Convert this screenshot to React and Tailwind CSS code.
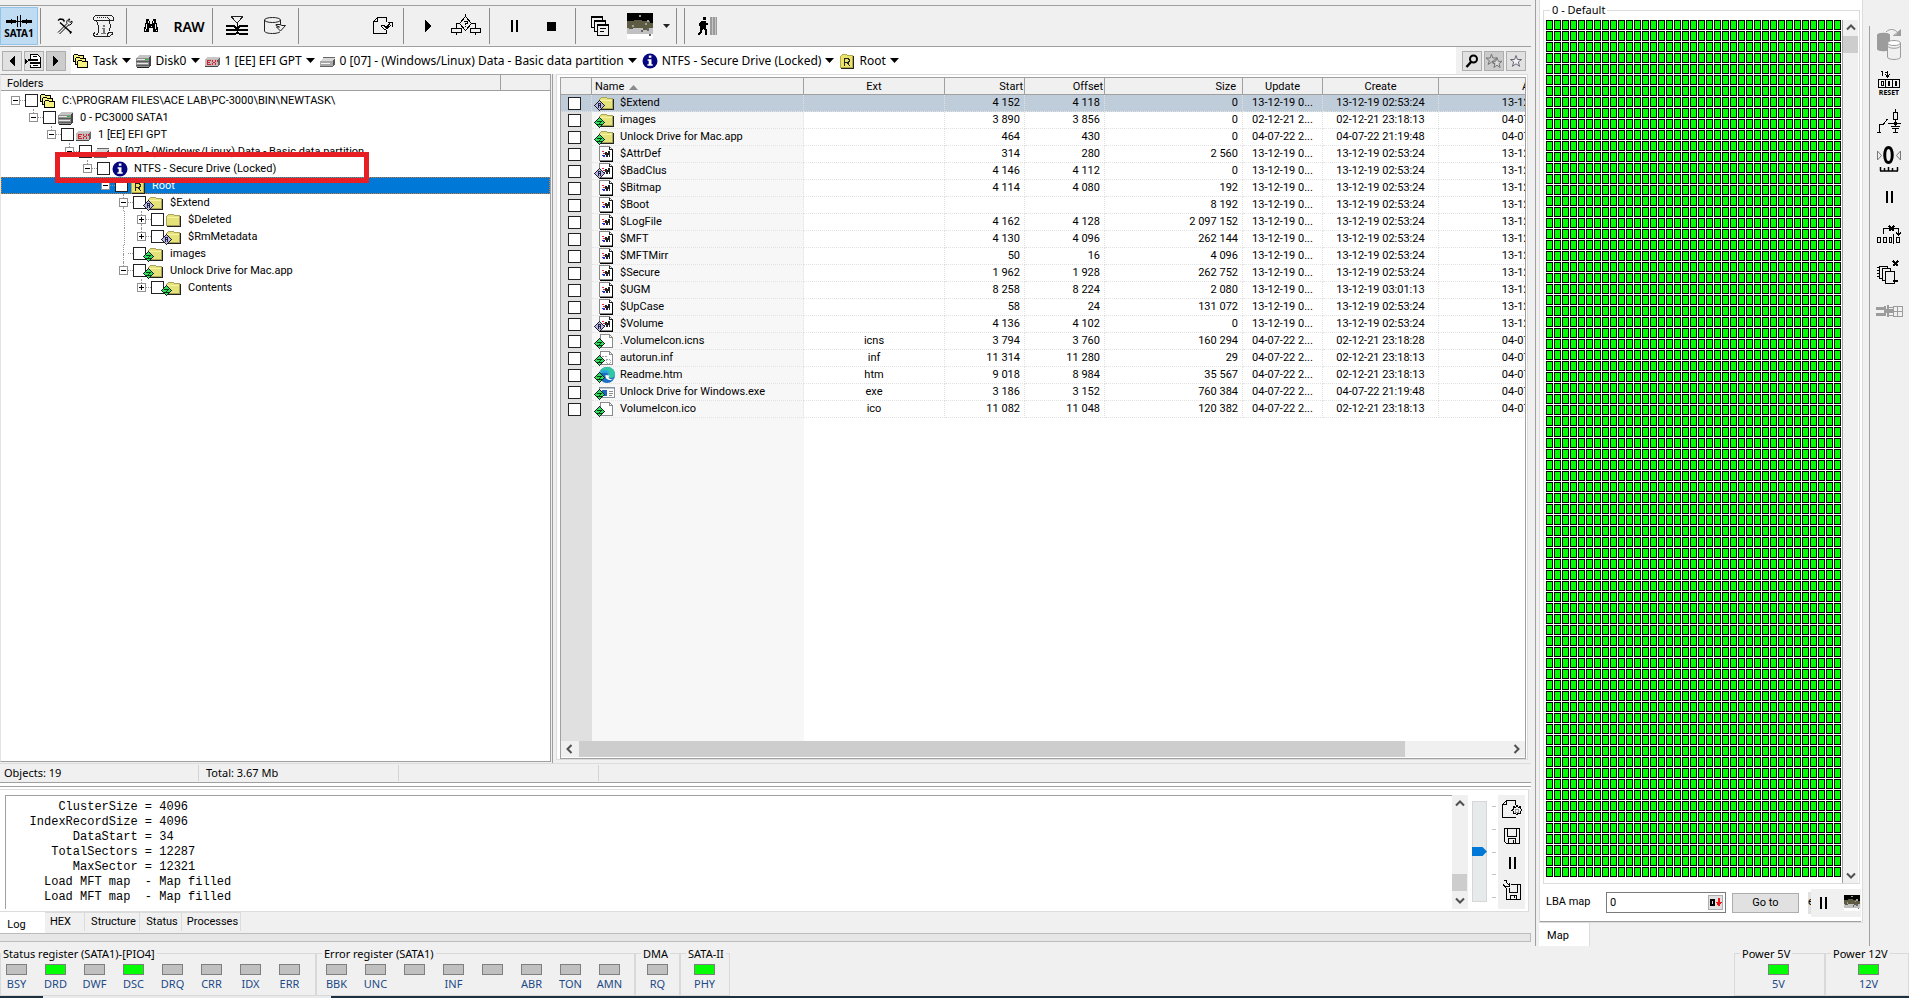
import React, { useState } from 'react';

const FILES = [
  { name: '$Extend', icon: 'folder', badge: 'r', ext: '', start: '4 152', offset: '4 118', size: '0', update: '13-12-19 0...', create: '13-12-19 02:53:24' },
  { name: 'images', icon: 'folder', badge: 'z', ext: '', start: '3 890', offset: '3 856', size: '0', update: '02-12-21 2...', create: '02-12-21 23:18:13' },
  { name: 'Unlock Drive for Mac.app', icon: 'folder', badge: 'z', ext: '', start: '464', offset: '430', size: '0', update: '04-07-22 2...', create: '04-07-22 21:19:48' },
  { name: '$AttrDef', icon: 'sys', ext: '', start: '314', offset: '280', size: '2 560', update: '13-12-19 0...', create: '13-12-19 02:53:24' },
  { name: '$BadClus', icon: 'sys', badge: 'r', ext: '', start: '4 146', offset: '4 112', size: '0', update: '13-12-19 0...', create: '13-12-19 02:53:24' },
  { name: '$Bitmap', icon: 'sys', ext: '', start: '4 114', offset: '4 080', size: '192', update: '13-12-19 0...', create: '13-12-19 02:53:24' },
  { name: '$Boot', icon: 'sys', ext: '', start: '', offset: '', size: '8 192', update: '13-12-19 0...', create: '13-12-19 02:53:24' },
  { name: '$LogFile', icon: 'sys', ext: '', start: '4 162', offset: '4 128', size: '2 097 152', update: '13-12-19 0...', create: '13-12-19 02:53:24' },
  { name: '$MFT', icon: 'sys', ext: '', start: '4 130', offset: '4 096', size: '262 144', update: '13-12-19 0...', create: '13-12-19 02:53:24' },
  { name: '$MFTMirr', icon: 'sys', ext: '', start: '50', offset: '16', size: '4 096', update: '13-12-19 0...', create: '13-12-19 02:53:24' },
  { name: '$Secure', icon: 'sys', ext: '', start: '1 962', offset: '1 928', size: '262 752', update: '13-12-19 0...', create: '13-12-19 02:53:24' },
  { name: '$UGM', icon: 'sys', ext: '', start: '8 258', offset: '8 224', size: '2 080', update: '13-12-19 0...', create: '13-12-19 03:01:13' },
  { name: '$UpCase', icon: 'sys', ext: '', start: '58', offset: '24', size: '131 072', update: '13-12-19 0...', create: '13-12-19 02:53:24' },
  { name: '$Volume', icon: 'sys', badge: 'r', ext: '', start: '4 136', offset: '4 102', size: '0', update: '13-12-19 0...', create: '13-12-19 02:53:24' },
  { name: '.VolumeIcon.icns', icon: 'doc', badge: 'z', ext: 'icns', start: '3 794', offset: '3 760', size: '160 294', update: '04-07-22 2...', create: '02-12-21 23:18:28' },
  { name: 'autorun.inf', icon: 'inf', badge: 'z', ext: 'inf', start: '11 314', offset: '11 280', size: '29', update: '04-07-22 2...', create: '02-12-21 23:18:13' },
  { name: 'Readme.htm', icon: 'edge', badge: 'z', ext: 'htm', start: '9 018', offset: '8 984', size: '35 567', update: '04-07-22 2...', create: '02-12-21 23:18:13' },
  { name: 'Unlock Drive for Windows.exe', icon: 'exe', badge: 'z', ext: 'exe', start: '3 186', offset: '3 152', size: '760 384', update: '04-07-22 2...', create: '04-07-22 21:19:48' },
  { name: 'VolumeIcon.ico', icon: 'doc', badge: 'z', ext: 'ico', start: '11 082', offset: '11 048', size: '120 382', update: '04-07-22 2...', create: '02-12-21 23:18:13' },
];

// up / down: dotted connector above and below the expander, lines: levels that carry a vertical connector
const TREE = [
  { level: 0, exp: '-', icon: 'task', label: 'C:\\PROGRAM FILES\\ACE LAB\\PC-3000\\BIN\\NEWTASK\\' },
  { level: 1, exp: '-', up: true, icon: 'disk', label: '0 - PC3000 SATA1' },
  { level: 2, exp: '-', up: true, icon: 'ex', label: '1 [EE] EFI GPT' },
  { level: 3, exp: '-', up: true, icon: 'part', label: '0 [07] - (Windows/Linux) Data - Basic data partition' },
  { level: 4, exp: '-', up: true, icon: 'info', label: 'NTFS - Secure Drive (Locked)' },
  { level: 5, exp: '-', up: true, icon: 'root', label: 'Root', selected: true },
  { level: 6, exp: '-', up: true, down: true, icon: 'folder', badge: 'r', label: '$Extend' },
  { level: 7, exp: '+', up: true, down: true, lines: [6], icon: 'folder', label: '$Deleted' },
  { level: 7, exp: '+', up: true, lines: [6], icon: 'folder', badge: 'r', label: '$RmMetadata' },
  { level: 6, exp: '', up: true, down: true, icon: 'folder', badge: 'z', label: 'images' },
  { level: 6, exp: '-', up: true, icon: 'folder', badge: 'z', label: 'Unlock Drive for Mac.app' },
  { level: 7, exp: '+', up: true, icon: 'folder', badge: 'z', label: 'Contents' },
];

const CRUMBS = [
  { icon: 'task', label: 'Task' },
  { icon: 'disk', label: 'Disk0' },
  { icon: 'ex', label: '1 [EE] EFI GPT' },
  { icon: 'part', label: '0 [07] - (Windows/Linux) Data - Basic data partition' },
  { icon: 'info', label: 'NTFS - Secure Drive (Locked)' },
  { icon: 'root', label: 'Root' },
];

const LOG = [
  '       ClusterSize = 4096',
  '   IndexRecordSize = 4096',
  '         DataStart = 34',
  '      TotalSectors = 12287',
  '         MaxSector = 12321',
  '     Load MFT map  - Map filled',
  '     Load MFT map  - Map filled',
].join('\n');

const STATUS_BITS = [['BSY', 0], ['DRD', 1], ['DWF', 0], ['DSC', 1], ['DRQ', 0], ['CRR', 0], ['IDX', 0], ['ERR', 0]];
const ERROR_BITS = [['BBK', 0], ['UNC', 0], ['', 0], ['INF', 0], ['', 0], ['ABR', 0], ['TON', 0], ['AMN', 0]];

const PANE_FONT = "font-['Roboto','Liberation_Sans',sans-serif] text-[11px]";

/* ---------- small icons (16 x 16) ---------- */

function Svg({ w = 16, h = 16, smooth, children, className = '' }) {
  return (
    <svg
      width={w}
      height={h}
      viewBox={`0 0 ${w} ${h}`}
      fill="none"
      shapeRendering={smooth ? 'auto' : 'crispEdges'}
      aria-hidden="true"
      className={`block shrink-0 ${className}`}
    >
      {children}
    </svg>
  );
}

function Page() {
  return (
    <>
      <path d="M1.5 1.5h9l3 3v10h-12z" fill="#fff" stroke="#8a8a8a" />
      <path d="M10.5 1.5v3h3" stroke="#8a8a8a" />
    </>
  );
}

function SmallIcon({ name }) {
  if (name === 'folder') {
    return (
      <Svg>
        <path d="M.5 13.500V4.500l2-2h5l1 1h5v10z" fill="#e6e27a" stroke="#a9a35c" />
        <path d="M1 5.500h12" stroke="#f6f3a4" />
        <path d="M1 14.500h14M14.500 4v11" stroke="#222" />
      </Svg>
    );
  }
  if (name === 'task') {
    return (
      <Svg>
        <path d="M.5 8.500V2.500l1-1h3l1 1h5v6z" fill="#f7f380" stroke="#000" />
        <path d="M2.500 11.500V5.500l1-1h3l1 1h5v6z" fill="#f7f380" stroke="#000" />
        <path d="M4.500 14.500V8.500l1-1h3l1 1h5v6z" fill="#f7f380" stroke="#000" />
      </Svg>
    );
  }
  if (name === 'disk') {
    return (
      <Svg>
        <path d="M3 2h12l-2 3H0z" fill="#c4c4c4" />
        <path d="M0 5h13v9H0z" fill="#8f8f8f" />
        <path d="M13 5l2-3v10l-2 2z" fill="#444" />
        <path d="M1 6.500h11M1 10.500h11" stroke="#e8e8e8" />
        <path d="M0 8.500h13M0 12.500h13" stroke="#5c5c5c" />
        <path d="M9 6.500h3" stroke="#27c427" />
        <path d="M1 14.500h12" stroke="#222" />
      </Svg>
    );
  }
  if (name === 'part') {
    return (
      <Svg>
        <path d="M3 5h12l-2 3H0z" fill="#d8d8d8" />
        <path d="M0 8h13v5H0z" fill="#a8a8a8" />
        <path d="M13 8l2-3v6l-2 2z" fill="#555" />
        <path d="M1 10.500h9" stroke="#f4f4f4" />
        <path d="M0 13.500h13M3 4.500h12" stroke="#666" />
      </Svg>
    );
  }
  if (name === 'ex') {
    return (
      <Svg>
        <path d="M3 4h12l-2 2H0z" fill="#c8c8c8" />
        <path d="M0 6h13v7H0z" fill="#c4bcbc" />
        <path d="M13 6l2-2v7l-2 2z" fill="#666" />
        <path d="M0 13.500h13" stroke="#444" />
        <path d="M2 7h4v1H3v1h2v1H3v1h3v1H2zM7 7h1v2h2V7h1v2h-1v1h1v2h-1v-2H8v2H7v-2h1V9H7z" fill="#d0202a" />
        <path d="M12 7h1v2h-1z" fill="#d0202a" />
      </Svg>
    );
  }
  if (name === 'info') {
    return (
      <Svg smooth>
        <circle cx="8" cy="8" r="7.500" fill="#06067e" />
        <path d="M6.800 2.600h2.600v2.200H6.800zM5.600 6.200h3.900v5h1.200v1.500H5.400v-1.500h1.300V7.700H5.600z" fill="#fff" />
      </Svg>
    );
  }
  if (name === 'root') {
    return (
      <Svg>
        <path d="M1.500 14.500V3.500l2-2h4l1 1h5v12z" fill="#ebe468" stroke="#b5a84c" />
        <path d="M2 15.500h13M14.500 3v12" stroke="#222" />
        <path d="M5.500 13V5.500h3.500l1 1v2l-1 1H6M8.500 9.500l2 3.500" stroke="#222" />
      </Svg>
    );
  }
  if (name === 'sys') {
    return (
      <Svg>
        <path d="M.5.5h10l3 3v11H.5z" fill="#fff" stroke="#888" />
        <path d="M10.500.5v3h3" stroke="#222" />
        <path d="M1 15h13M13.500 4v11" stroke="#000" />
        <path d="M3 5.500h2M4 7.500h2" stroke="#e02a2a" />
        <path d="M3 9.500h3M4 10.500h2" stroke="#2a2ad8" />
        <path d="M6 6h2v1h1V5h2v6h-1V9H9v2H7V9H6z" fill="#222" />
      </Svg>
    );
  }
  if (name === 'doc') return <Svg><Page /></Svg>;
  if (name === 'inf') {
    return (
      <Svg>
        <Page />
        <circle cx="5.500" cy="8.500" r="2.500" stroke="#999" strokeDasharray="2 1" />
        <circle cx="9.500" cy="11.500" r="2" stroke="#aaa" strokeDasharray="2 1" />
      </Svg>
    );
  }
  if (name === 'edge') {
    return (
      <Svg smooth>
        <circle cx="8" cy="8" r="8" fill="#1a6fc4" />
        <path d="M0 7.500C.8 2.600 4.500 0 8.500 0 13 0 16 3.300 16 7c0 2.500-1.800 4-4 4-1.500 0-2.500-.6-2.200-1.600.3-2.500-1.800-4.200-4.200-4.200C3 5.200 1 6.200 0 7.500z" fill="#33c6a4" />
        <path d="M0 7.500C1.500 3.200 5 2.200 8 3.400c2 .9 2.600 2.400 2.400 4C9 5.500 3 4.500 0 7.500z" fill="#2aa7dc" />
        <path d="M6.600 8c-.8 3 1.800 5.200 5 5.200l3-1.400c-1.600.6-4.600.5-5-1.200L10.500 8.500z" fill="#fff" />
      </Svg>
    );
  }
  return (
    <Svg>
      <path d="M.5 3.500h15v10H.5z" fill="#fff" stroke="#8a93a0" />
      <path d="M1 4.500h14" stroke="#b9c4d2" />
      <path d="M3 6h5v6H3z" fill="#1f66c0" />
      <path d="M10 7.500h4M10 9.500h4M10 11.500h3" stroke="#8a8a8a" />
    </Svg>
  );
}

function ItemIcon({ name, badge }) {
  return (
    <span className="relative block h-4 w-4 shrink-0">
      <SmallIcon name={name} />
      {badge && (
        <Svg w={11} h={11} className="absolute top-[5px] -left-[5px]">
          <path d="M5.500.5l5 5-5 5-5-5z" fill={badge === 'z' ? '#2fe060' : '#b9b9dc'} stroke="#1c1c2c" />
          {badge === 'z' ? (
            <path d="M3 4.500h5M7 5.500l-3 2M3 7.500h5" stroke="#04380f" />
          ) : (
            <path d="M4.500 8V3.500h2v2h-2M6.500 6v2" stroke="#20204a" />
          )}
        </Svg>
      )}
    </span>
  );
}

function Down() {
  return (
    <Svg w={9} h={5} smooth>
      <path d="M0 0h9L4.500 5z" fill="#000" />
    </Svg>
  );
}

function Pause() {
  return (
    <Svg w={24} h={24}>
      <path d="M9 6h2v12H9zM14 6h2v12h-2z" fill="#000" />
    </Svg>
  );
}

function Landscape({ w = 26, h = 26 }) {
  return (
    <svg width={w} height={h} viewBox="0 0 26 26" shapeRendering="crispEdges" preserveAspectRatio="none" aria-hidden="true" className="block shrink-0">
      <rect width="26" height="8" fill="#000" />
      <rect y="8" width="26" height="7" fill="#5d5b42" />
      <rect y="15" width="26" height="6" fill="#c0c0c0" />
      <rect y="21" width="26" height="5" fill="#fff" />
      <path d="M0 8v3h2V8zM7 7h8v1H7zM16 15h5v2h-5zM2 15h4v1H2z" fill="#5d5b42" />
      <path d="M20 6h6v4h-3V8h-3z" fill="#000" />
      <path d="M12 2h2v2h-2zM5 12h2v2H5zM18 10h2v2h-2zM20 7h2v2h-2z" fill="#a0a0a0" />
      <path d="M14 17h2v2h-2zM20 15h2v3h-2zM22 21h2v2h-2z" fill="#666" />
    </svg>
  );
}

/* ---------- toolbar pieces ---------- */

function Tool({ label, children, className = 'w-[38px]' }) {
  return (
    <button type="button" aria-label={label} className={`flex h-[38px] shrink-0 items-center justify-center ${className}`}>
      {children}
    </button>
  );
}

function Group({ children, className = 'pr-1 pl-[5px]' }) {
  return <div className={`flex h-9 items-center border-r border-[#8c8c8c] ${className}`}>{children}</div>;
}

function MainToolbar() {
  return (
    <div className="flex h-[42px] shrink-0 items-center border-y border-[#a0a0a0]">
      <button type="button" className="flex h-[38px] w-[38px] shrink-0 flex-col items-center border border-[#92c4ea] bg-[#bfdcf3] pt-[7px]">
        <Svg w={28} h={12}>
          <path d="M1 6.500h26" stroke="#000" strokeWidth="1" />
          <path d="M1 5h4l2-1v5L5 8H1zM27 5h-4l-2-1v5l2-1h4z" fill="#000" />
          <path d="M7 5h4v3H7zM17 5h4v3h-4z" fill="#000" />
          <path d="M12.500 1v11M15.500 0v12" stroke="#000" />
        </Svg>
        <span className="text-[10px] leading-3 font-bold">SATA1</span>
      </button>
      <Group className="w-[3px]" />
      <Group>
        <Tool label="Settings">
          <Svg w={18} h={18} smooth>
            <path d="M2 3.500l2-1.500 3 .5 1.500 2M4 5.500l11 10M15.500 14.500l-1.500 2" stroke="#000" strokeWidth="1.500" />
            <path d="M2 15.500l9-9M3.500 17l9-9" stroke="#000" />
            <path d="M11 6.500c-1-2 .5-4.500 3-4.500l-1.500 2 1.500 1.500 2-1.500c.5 2.500-1.500 4.500-4 4" stroke="#000" />
          </Svg>
        </Tool>
        <Tool label="Script">
          <Svg w={24} h={24}>
            <path d="M4.500 1.500h16l2 2v3h-4l-1-2.500M4.500 1.500l-2 2v2l1 1h15M5.500 7l2 5v6l-2 3.500M18.500 7l1 5-1 5" stroke="#222" />
            <path d="M5.500 22.500h13l3-2.500v-2h-3l-2 2v2.500M3.500 18.500l-1 2 1 2h2" stroke="#222" />
            <path d="M6 3.500h11" stroke="#222" strokeDasharray="1 1" />
            <path d="M12 11h2v2h-2zM11 14h3v5h1v1h-5v-1h2v-4h-1z" fill="#777" />
          </Svg>
        </Tool>
      </Group>
      <Group>
        <Tool label="Search">
          <Svg w={18} h={16}>
            <path d="M4 1h3v2h1v3h2V3h1V1h3v2l1 4 1 4v3h-5v-4H7v4H2v-3l1-4 1-4z" fill="#000" />
            <path d="M4.500 6v5M6.500 3v2M13.500 6v5M11.500 3v2M3.500 11v2M14.500 12v1M9 7.500v1" stroke="#f0f0f0" />
          </Svg>
        </Tool>
        <Tool label="RAW recovery">
          <span className="text-[14px] font-semibold">RAW</span>
        </Tool>
      </Group>
      <Group>
        <Tool label="Map">
          <Svg w={24} h={22}>
            <path d="M6 1.500h12M6.500 2l5.500 6 5.500-6" stroke="#222" />
            <path d="M1 10h8l3 2 3-2h8v2h-7l-3 2h-2l-3-2H1zM1 14h22v2H1zM1 18h8l3-1 3 1h8v2h-8l-3-1-3 1H1z" fill="#000" />
            <path d="M12 8v10" stroke="#000" />
          </Svg>
        </Tool>
        <Tool label="Export disk">
          <Svg w={24} h={20} smooth>
            <path d="M1.500 4v11c0 1.500 3.500 2.500 8 2.500 3.500 0 6.500-.7 7.500-1.700M17.500 9V4" stroke="#222" />
            <ellipse cx="9.500" cy="4" rx="8" ry="2.500" stroke="#222" />
            <path d="M13 8.500h4l2 1h3.500L17.500 15l-4-4h3l-3.500-1.500z" fill="#f0f0f0" stroke="#222" />
          </Svg>
        </Tool>
      </Group>
      <Group className="pr-[1px] pl-[65px]">
        <Tool label="Open page">
          <Svg w={22} h={20}>
            <path d="M5.500 1.500h9v4M5.500 1.500l-4 4v12h13v-4M5.500 1.500v4h-4" stroke="#000" />
            <path d="M9 9.500h3l2 2 4-4M9 10l4 4 6-5M16 6.500h4.500V11" stroke="#000" />
          </Svg>
        </Tool>
      </Group>
      <Group>
        <Tool label="Start">
          <Svg w={8} h={12}><path d="M1 0l6 6-6 6z" fill="#000" /></Svg>
        </Tool>
        <Tool label="Conditions">
          <Svg w={32} h={24}>
            <path d="M15.500 0v3M15.500 2.500l6 7-6 7-6-7zM10 9.500H6.500V14M21 9.500h4.500V14" stroke="#000" />
            <path d="M1.500 14.500h10v4h-10zM20.500 14.500h10v4h-10zM6.500 19v2M25.500 19v2" stroke="#000" />
            <path d="M14 7.500h3v2h-1.500V11M15.500 12v1" stroke="#000" />
          </Svg>
        </Tool>
      </Group>
      <Group>
        <Tool label="Pause"><Pause /></Tool>
        <Tool label="Stop">
          <Svg w={10} h={10}><path d="M0 1h9v9H0z" fill="#000" /></Svg>
        </Tool>
      </Group>
      <Group>
        <Tool label="Windows">
          <Svg w={20} h={22}>
            <path d="M1.500 1.500h11v11h-11z" fill="#f0f0f0" stroke="#000" />
            <path d="M1 2.500h12" stroke="#000" />
            <path d="M4.500 5.500h11v11h-11z" fill="#f0f0f0" stroke="#000" />
            <path d="M4 6.500h12" stroke="#000" />
            <path d="M7.500 9.500h11v11h-11z" fill="#f0f0f0" stroke="#000" />
            <path d="M7 10.500h12M10 13.500h6M10 16.500h4" stroke="#000" />
          </Svg>
        </Tool>
        <Tool label="Picture" className="w-[42px]"><Landscape /></Tool>
        <Tool label="Picture menu" className="w-[11px]">
          <Svg w={7} h={4} smooth><path d="M0 0h7L3.500 4z" fill="#222" /></Svg>
        </Tool>
      </Group>
      <Group className="w-2" />
      <Tool label="Exit" className="ml-1 w-[38px]">
        <Svg w={20} h={20}>
          <path d="M12 1h7v18h-7z" fill="#9a9a9a" />
          <path d="M14.500 1v18M17.500 1v18" stroke="#c4c4c4" />
          <path d="M5 1h3v3H5zM4 5h4v2h2v2H8v3l1 2v5H7v-4l-2-2-1 3-2 3H0v-2l2-2V9l-1 1V7z" fill="#000" />
        </Svg>
      </Tool>
    </div>
  );
}

function SquareButton({ label, dark, children }) {
  return (
    <button
      type="button"
      aria-label={label}
      className={`flex h-5 w-5 shrink-0 items-center justify-center border border-[#adadad] ${dark ? 'bg-[#cccccc]' : 'bg-[#e1e1e1]'}`}
    >
      {children}
    </button>
  );
}

function Breadcrumbs() {
  return (
    <nav aria-label="Path" className="flex h-[27px] shrink-0 items-center pr-[5px]">
      <div className="flex h-full w-[71px] shrink-0 items-center gap-[2px] pl-[2px]">
        <SquareButton label="Back"><Svg w={8} h={10}><path d="M7 0v10L1 5z" fill="#000" /></Svg></SquareButton>
        <SquareButton label="History">
          <Svg w={18} h={16}>
            <path d="M0 6l3 2.500L0 11z" fill="#000" />
            <path d="M5.500 5.500v-4h7l3 3v10h-10v-3" fill="#fff" stroke="#000" />
            <path d="M3 6h10v2H3zM5 9h10v2H5zM8 3h4v1H8zM8 12h5v1H8z" fill="#000" />
          </Svg>
        </SquareButton>
        <SquareButton label="Forward" dark><Svg w={8} h={10}><path d="M1 0v10l6-5z" fill="#000" /></Svg></SquareButton>
      </div>
      <div className="flex h-full min-w-0 flex-1 items-center gap-[5px] overflow-hidden bg-white pl-[2px] font-['Noto_Sans','Open_Sans',sans-serif] text-[12px]">
        {CRUMBS.map((c) => (
          <button key={c.label} type="button" className="flex items-center gap-1 whitespace-nowrap">
            <SmallIcon name={c.icon} />
            <span>{c.label}</span>
            <Down />
          </button>
        ))}
      </div>
      <div className="flex shrink-0 items-center gap-[2px] pl-[6px]">
        <SquareButton label="Find">
          <Svg w={14} h={14} smooth>
            <circle cx="8.500" cy="5" r="3.500" stroke="#000" strokeWidth="2" />
            <path d="M6 8l-4.500 5" stroke="#000" strokeWidth="2.500" />
          </Svg>
        </SquareButton>
        <SquareButton label="Add to favorites" dark>
          <Svg w={18} h={16} smooth>
            <path d="M6.500 1l1.300 4H12L8.700 7.500l1.200 4-3.400-2.400-3.400 2.400 1.200-4L1 5h4.200z" stroke="#777" />
            <path d="M12 4.500l1.300 3.800H17l-3 2.300 1.100 3.900-3.100-2.300-3.100 2.300 1.100-3.900-3-2.300h3.700z" fill="#ddd" stroke="#777" />
          </Svg>
        </SquareButton>
        <SquareButton label="Favorites">
          <Svg w={14} h={14} smooth>
            <path d="M7 1.500l1.400 4h4.200L9.300 8l1.300 4.300L7 9.800l-3.600 2.500L4.700 8 1.400 5.500h4.200z" fill="#f3f3f3" stroke="#667" />
          </Svg>
        </SquareButton>
      </div>
    </nav>
  );
}

/* ---------- panes ---------- */

function Checkbox({ label, className = '' }) {
  return (
    <input
      type="checkbox"
      aria-label={label}
      className={`block h-[13px] w-[13px] shrink-0 appearance-none border border-[#222] bg-white checked:bg-[#0078d7] ${className}`}
    />
  );
}

function TreeRow({ row, selected, onSelect }) {
  const lines = row.lines || [];
  return (
    <li
      role="treeitem"
      aria-selected={selected}
      onClick={onSelect}
      className={`flex h-[17px] items-center pl-[6px] ${selected ? 'bg-[#0078d7] text-white outline-1 -outline-offset-1 outline-dotted outline-[#cf7a2c]' : ''}`}
    >
      {Array.from({ length: row.level }, (_, i) => (
        <span key={i} className="flex h-full w-[18px] shrink-0 justify-center">
          {lines.includes(i) && <span className="h-full border-l border-dotted border-[#999]" />}
        </span>
      ))}
      <span className="flex h-full w-[18px] shrink-0 items-center pl-[4px]">
        <span className="flex h-full w-[9px] flex-col items-center">
          <span className={`flex-1 ${row.up ? 'border-l border-dotted border-[#999]' : ''}`} />
          {row.exp && (
            <button type="button" aria-label="Expand" className="block border border-[#919191] bg-white">
              <Svg w={7} h={7}>
                <path d="M1 3.500h5" stroke="#000" />
                {row.exp === '+' && <path d="M3.500 1v5" stroke="#000" />}
              </Svg>
            </button>
          )}
          <span className={`flex-1 ${row.down ? 'border-l border-dotted border-[#999]' : ''}`} />
        </span>
        <span className="w-[5px] border-t border-dotted border-[#999]" />
      </span>
      <Checkbox label={row.label} className="mr-[2px]" />
      <ItemIcon name={row.icon} badge={row.badge} />
      <span className="pl-[6px] leading-4 whitespace-nowrap">{row.label}</span>
    </li>
  );
}

function FoldersPane() {
  const [current, setCurrent] = useState(5);
  return (
    <section className={`mb-px flex w-[551px] shrink-0 flex-col border border-[#a0a0a0] border-l-[#e3e3e3] bg-white ${PANE_FONT}`}>
      <div className="flex h-4 shrink-0 border-b border-[#a0a0a0] bg-[#f0f0f0]">
        <span className="w-[500px] border-r border-[#a0a0a0] pt-px pl-[6px] leading-[15px]">Folders</span>
      </div>
      <div className="relative min-h-0 flex-1 overflow-hidden pt-px">
        <ul role="tree">
          {TREE.map((row, i) => (
            <TreeRow key={row.label} row={row} selected={i === current} onSelect={() => setCurrent(i)} />
          ))}
        </ul>
        <div className="pointer-events-none absolute top-[61px] left-[54px] h-[31px] w-[314px] border-[5px] border-[#e81e25]" />
      </div>
    </section>
  );
}

function Chevron({ dir }) {
  const d = {
    left: 'M6.500 1L2.500 5l4 4',
    right: 'M3.500 1l4 4-4 4',
    up: 'M1 6.500l4-4 4 4',
    down: 'M1 3.500l4 4 4-4',
  }[dir];
  return <Svg w={10} h={10} smooth><path d={d} stroke="#505050" strokeWidth="2" /></Svg>;
}

const TH = 'h-[17px] overflow-hidden border-r border-b border-[#a0a0a0] bg-[#f0f0f0] px-0 pt-[2px] pb-0 font-normal leading-[14px] whitespace-nowrap';
const TD = 'h-[17px] overflow-hidden border-r border-b border-dotted border-[#e2e2e2] p-0 leading-4 whitespace-nowrap';

function FilesPane() {
  return (
    <section className={`mb-[3px] ml-[3px] flex min-w-0 flex-1 flex-col border border-[#dcdcdc] bg-white pt-[2px] pr-px pl-[3px] ${PANE_FONT}`}>
      <div className="flex min-h-0 flex-1 flex-col border border-[#a0a0a0] pb-px">
        <div className="min-h-0 flex-1 overflow-hidden bg-[linear-gradient(to_right,#e0e0e0_31px,#f7f7f7_31px,#f7f7f7_243px,#ffffff_243px)]">
          <table className="w-[1093px] table-fixed border-separate border-spacing-0">
            <colgroup>
              <col className="w-[31px]" />
              <col className="w-[212px]" />
              <col className="w-[141px]" />
              <col className="w-[80px]" />
              <col className="w-[80px]" />
              <col className="w-[138px]" />
              <col className="w-[80px]" />
              <col className="w-[116px]" />
              <col className="w-[215px]" />
            </colgroup>
            <thead>
              <tr>
                <th className={TH} />
                <th className={`${TH} pl-[3px] text-left`}>
                  <span className="flex items-center gap-[5px]">
                    Name
                    <Svg w={9} h={5} smooth><path d="M0 5h9L4.500 0z" fill="#8a8a8a" /></Svg>
                  </span>
                </th>
                <th className={TH}>Ext</th>
                <th className={`${TH} pr-px text-right`}>Start</th>
                <th className={`${TH} pr-px text-right`}>Offset</th>
                <th className={`${TH} pr-[6px] text-right`}>Size</th>
                <th className={TH}>Update</th>
                <th className={TH}>Create</th>
                <th className={TH}>Accessed</th>
              </tr>
            </thead>
            <tbody>
              {FILES.map((f, i) => (
                <tr key={f.name} className={i === 0 ? 'bg-[#bfccda]' : ''}>
                  <td className={TD}><Checkbox label={f.name} className="ml-[7px]" /></td>
                  <td className={`${TD} pl-[7px]`}>
                    <span className="flex h-4 items-center gap-[5px]">
                      <ItemIcon name={f.icon} badge={f.badge} />
                      {f.name}
                    </span>
                  </td>
                  <td className={`${TD} text-center`}>{f.ext}</td>
                  <td className={`${TD} pr-1 text-right`}>{f.start}</td>
                  <td className={`${TD} pr-1 text-right`}>{f.offset}</td>
                  <td className={`${TD} pr-1 text-right`}>{f.size}</td>
                  <td className={`${TD} text-center`}>{f.update}</td>
                  <td className={`${TD} text-center`}>{f.create}</td>
                  <td className={`${TD} text-center`}>{i === 1 || i === 2 || i > 13 ? '04-07-22 21:19:48' : '13-12-19 02:53:24'}</td>
                </tr>
              ))}
            </tbody>
          </table>
        </div>
        <div className="flex h-4 shrink-0 bg-[#f0f0f0]">
          <button type="button" aria-label="Scroll left" className="flex w-[18px] items-center justify-center"><Chevron dir="left" /></button>
          <div className="flex flex-1"><div className="w-[89%] bg-[#cdcdcd]" /></div>
          <button type="button" aria-label="Scroll right" className="flex w-[18px] items-center justify-center"><Chevron dir="right" /></button>
        </div>
      </div>
    </section>
  );
}

function LogPanel() {
  const [speed, setSpeed] = useState(2);
  return (
    <section className="mr-[2px] flex h-[123px] shrink-0 border border-l-0 border-[#dcdcdc] bg-white pt-[5px] pb-[2px] pl-[5px]">
      <pre className="min-w-0 flex-1 overflow-hidden border-t border-l border-[#a0a0a0] pt-1 pl-[2px] font-['Liberation_Mono',monospace] text-[12px] leading-[15px]">
        {LOG}
      </pre>
      <div className="flex w-4 flex-col items-center bg-[#f0f0f0]">
        <button type="button" aria-label="Scroll up" className="flex h-[18px] w-full items-center justify-center"><Chevron dir="up" /></button>
        <div className="flex w-full flex-1 flex-col justify-end"><div className="h-[17px] w-[15px] bg-[#cdcdcd]" /></div>
        <button type="button" aria-label="Scroll down" className="flex h-[18px] w-full items-center justify-center"><Chevron dir="down" /></button>
      </div>
      <input
        type="range"
        min="0"
        max="4"
        value={speed}
        onChange={(e) => setSpeed(Number(e.target.value))}
        aria-label="Log detail"
        className="mt-[6px] ml-1 h-[101px] w-[15px] appearance-none border border-[#d6d6d6] bg-[#e7eaea] [writing-mode:vertical-lr] [&::-webkit-slider-thumb]:h-[9px] [&::-webkit-slider-thumb]:w-[15px] [&::-webkit-slider-thumb]:appearance-none [&::-webkit-slider-thumb]:bg-[#0078d7] [&::-webkit-slider-thumb]:[clip-path:polygon(0_0,70%_0,100%_50%,70%_100%,0_100%)]"
      />
      <div className="ml-[5px] flex w-1 flex-col justify-between py-[11px]">
        {[0, 1, 2, 3, 4].map((t) => <span key={t} className="h-px bg-[#c4c4c4]" />)}
      </div>
      <div className="mr-[3px] ml-[2px] flex w-[27px] flex-col items-center bg-[#f0f0f0]">
        <button type="button" aria-label="New log" className="flex h-[27px] items-center">
          <Svg w={22} h={20}>
            <path d="M5.500 1.500h9v4M5.500 1.500l-4 4v13h13M5.500 1.500v4h-4" fill="none" stroke="#000" />
            <path d="M12.500 7.500l2 1 1.500-2 1.500 2 2-1v2l1.500 1.500-1.500 1.500v2l-2-.5-1.500 2-1.500-2-2 .5v-2L11 11.500l1.500-1.500z" stroke="#000" />
            <path d="M14.500 10.500h3v3h-3z" stroke="#999" />
          </Svg>
        </button>
        <button type="button" aria-label="Save log" className="flex h-[27px] items-center">
          <Svg w={16} h={16}>
            <path d="M.5.5h15v15h-13l-2-2zM3.500.5v8h9v-8M4.500 15.500v-5h7v5M9.500 12v3" stroke="#000" />
          </Svg>
        </button>
        <button type="button" aria-label="Pause log" className="flex h-[27px] items-center"><Pause /></button>
        <button type="button" aria-label="Save log as" className="flex h-[27px] items-center">
          <Svg w={20} h={20}>
            <path d="M4.500 8v11h14V4.500H9M7.500 8v4h8V5M8.500 19v-4h6v4M12.500 16v2" stroke="#000" />
            <path d="M1.500.5h3v2l3 3M7.500 2.500v4h-4M1 4.500l3 3" stroke="#000" />
          </Svg>
        </button>
      </div>
    </section>
  );
}

function LogTabs() {
  const tab = 'mb-[2px] border-t border-r border-[#dcdcdc] leading-[18px]';
  return (
    <div role="tablist" className={`flex h-[21px] shrink-0 ${PANE_FONT}`}>
      <button type="button" role="tab" aria-selected="true" className="w-[45px] bg-white pt-1 pr-3 leading-4">Log</button>
      <button type="button" role="tab" className={`${tab} w-10 pr-2`}>HEX</button>
      <button type="button" role="tab" className={`${tab} w-[55px] pl-[3px]`}>Structure</button>
      <button type="button" role="tab" className={`${tab} w-[42px] pl-[3px]`}>Status</button>
      <button type="button" role="tab" className={`${tab} w-[59px] pl-[3px]`}>Processes</button>
    </div>
  );
}

/* ---------- right side ---------- */

function MapPanel() {
  return (
    <div className="mr-[6px] ml-[3px] flex w-[324px] shrink-0 flex-col">
      <div className="flex min-h-0 flex-1 flex-col border border-t-0 border-[#dcdcdc] bg-white">
        <fieldset className="mr-[2px] ml-[3px] flex min-h-0 flex-1 border border-[#dcdcdc] pl-[2px]">
          <legend className="ml-1 px-[2px] text-[11px] leading-5">0 - Default</legend>
          <div className="flex h-full">
            <svg className="block h-[858px] w-[296px] shrink-0" shapeRendering="crispEdges" role="img" aria-label="Sector map">
              <defs>
                <pattern id="cell" width="8" height="11" patternUnits="userSpaceOnUse">
                  <rect width="7" height="10" fill="#000" />
                  <rect x="1" y="1" width="5" height="8" fill="#00ff00" />
                </pattern>
              </defs>
              <rect width="296" height="858" fill="url(#cell)" />
            </svg>
            <div className="flex w-4 flex-col items-center border-l border-[#a0a0a0] bg-[#f0f0f0]">
              <button type="button" aria-label="Scroll map up" className="flex h-4 w-full items-center justify-center"><Chevron dir="up" /></button>
              <div className="w-full flex-1"><div className="h-[17px] w-full bg-[#cdcdcd]" /></div>
              <button type="button" aria-label="Scroll map down" className="flex h-4 w-full items-center justify-center"><Chevron dir="down" /></button>
            </div>
          </div>
        </fieldset>
        <div className={`mr-px flex h-[38px] shrink-0 items-center border-b border-[#a0a0a0] pl-[6px] ${PANE_FONT}`}>
          <label htmlFor="lba" className="w-[60px]">LBA map</label>
          <div className="flex h-[21px] w-[120px] items-center border border-[#7a7a7a] bg-white pr-[2px] pl-[3px]">
            <input id="lba" type="text" defaultValue="0" className="min-w-0 flex-1 leading-4 outline-none" />
            <button type="button" aria-label="Decimal" className="flex h-[15px] w-[15px] items-center justify-center border border-[#adadad] bg-[#e1e1e1]">
              <Svg w={12} h={9}>
                <path d="M0 1h4l1 1v5L4 8H0zM2 3v3h1V3z" fill="#000" fillRule="evenodd" />
                <path d="M8 0h2v4h2L9 9 6 4h2z" fill="#f01818" />
              </Svg>
            </button>
          </div>
          <button type="button" className="ml-[6px] h-5 w-[67px] border border-[#adadad] bg-[#e1e1e1] leading-4">Go to</button>
          <span className="ml-[9px] h-[22px] w-[3px] overflow-hidden bg-[#e1e1e1] leading-5">e</span>
          <div className="flex h-7 min-w-0 flex-1 items-center overflow-hidden bg-[#f0f0f0]">
            <button type="button" aria-label="Pause map"><Pause /></button>
            <button type="button" aria-label="Map picture" className="ml-[9px] shrink-0"><Landscape w={16} h={16} /></button>
          </div>
        </div>
      </div>
      <div role="tablist" className={`flex h-[23px] shrink-0 ${PANE_FONT}`}>
        <button type="button" role="tab" aria-selected="true" className="w-[51px] border-r border-[#dcdcdc] bg-white pt-1 pr-3">Map</button>
      </div>
    </div>
  );
}

function SideToolbar() {
  return (
    <aside className="mt-[26px] flex w-10 shrink-0 flex-col border-l border-[#a0a0a0]">
      <Tool label="Copy disk">
        <Svg w={28} h={32} smooth>
          <path d="M2 6c0-3 13-3 13 0v14c0 3-13 3-13 0z" fill="#9c9c9c" />
          <path d="M11 3c4-4 9-3 12 1M18.500 6.500h7V1z" stroke="#9c9c9c" fill="none" />
          <path d="M20 7h6V0z" fill="#9c9c9c" />
          <path d="M12.500 14v14c0 3.300 13 3.300 13 0V14" fill="#f0f0f0" stroke="#9c9c9c" />
          <ellipse cx="19" cy="14" rx="6.500" ry="2.500" fill="#fff" stroke="#9c9c9c" />
          <path d="M12.500 17c1 3 12 3 13 0" stroke="#9c9c9c" />
        </Svg>
      </Tool>
      <Tool label="Reset counter">
        <span className="flex flex-col items-center">
          <Svg w={24} h={18}>
            <path d="M4 1.500h1.500V6M10.500 1v6M8.500 4.500l2 3 2-3M8 2.500h2" stroke="#000" />
            <path d="M1.500 9.500h21v8h-21zM8.500 9.500v8M15.500 9.500v8" stroke="#000" />
            <path d="M4.500 11.500h1.500v4H4.500zM11.500 11.500h1v4h-1zM18.500 11.500h1v4h-1z" stroke="#000" />
          </Svg>
          <span className="text-[7px] leading-[9px] font-bold">RESET</span>
        </span>
      </Tool>
      <Tool label="Power switch">
        <Svg w={26} h={26}>
          <path d="M1 24.500h4M3.500 24v-8h4l4-5M12 15.500h13" stroke="#000" />
          <path d="M19.500 1v3M17.500 4.500h4v7h-4zM19.500 12v6M15 18.500h9M16 20.500h7M19.500 21v3M17 24.500h5" stroke="#000" />
          <path d="M18 14h3v3h-3z" fill="#000" />
        </Svg>
      </Tool>
      <Tool label="Zero position">
        <Svg w={26} h={28} smooth>
          <path d="M12.500 2.500c-5 0-5 15 0 15s5-15 0-15z" stroke="#000" strokeWidth="3" />
          <path d="M1.500 6v9l4-4.500zM24.500 6v9l-4-4.500z" stroke="#777" />
          <path d="M4 26h18M4.500 22v4M8.500 23v3M12.500 22v4M16.500 23v3M21.500 22v4" stroke="#000" strokeWidth="1.500" />
        </Svg>
      </Tool>
      <Tool label="Pause process"><Pause /></Tool>
      <Tool label="Skip block">
        <Svg w={26} h={22}>
          <path d="M1.500 13.500h3v5h-3zM7.500 13.500h3v5h-3zM13.500 13.500h2v5h-2zM20.500 13.500h3v5h-3zM17.500 10v10" stroke="#000" />
          <path d="M7.500 10V4.500H22.500V11M20 8.500l2.500 2.500 2.500-2.500" stroke="#000" />
          <path d="M13 2l5 5M18 2l-5 5" stroke="#000" strokeWidth="2" />
        </Svg>
      </Tool>
      <Tool label="Clear queue">
        <Svg w={26} h={26}>
          <path d="M3.500 6.500h8v12h-8zM1 7.500h2M1 10.500h2M1 13.500h2M1 16.500h2" fill="#f0f0f0" stroke="#000" />
          <path d="M6.500 8.500h8v12h-8z" fill="#f0f0f0" stroke="#000" />
          <path d="M9.500 11.500h9v12h-9z" fill="#f0f0f0" stroke="#000" />
          <path d="M17 20h5v2h-5z" fill="#000" />
          <path d="M17 1l5 5M22 1l-5 5" stroke="#000" strokeWidth="2" />
        </Svg>
      </Tool>
      <Tool label="Connector">
        <Svg w={28} h={14}>
          <path d="M1 3h8v3H1zM1 9h8v3H1zM9 2h2v10H9zM11 5h7v4h-7zM12 1h2v12h-2z" fill="#9c9c9c" />
          <path d="M18.500 2.500h9v10h-9zM18.500 7.500h9M22.500 2.500v10M14 3.500h4M14 11.500h4" stroke="#9c9c9c" />
        </Svg>
      </Tool>
    </aside>
  );
}

/* ---------- registers ---------- */

function Registers({ title, bits, className, legend = 'ml-[5px]' }) {
  return (
    <fieldset className="border border-[#d9d9d9]">
      <legend className={`px-[2px] leading-[15px] whitespace-nowrap ${legend}`}>{title}</legend>
      <div className={`flex h-full gap-[18px] pt-[3px] ${className}`}>
        {bits.map(([name, on], i) => (
          <div key={i} className="flex w-[21px] flex-col items-center gap-[2px]">
            <span className={`h-[11px] w-[21px] shrink-0 border border-[#7f7f7f] ${on ? 'bg-[#00ff00]' : 'bg-[#c0c0c0]'}`} />
            <span className="leading-[14px] text-[#1c4a86]">{name}</span>
          </div>
        ))}
      </div>
    </fieldset>
  );
}

export default function App() {
  return (
    <div className="flex h-screen w-full flex-col overflow-hidden bg-[#f0f0f0] font-['Noto_Sans','Open_Sans',sans-serif] text-[11px] text-black">
      <div className="flex min-h-0 flex-1">
        <div className="flex min-w-0 flex-1 flex-col border-r border-[#a0a0a0] pt-[5px] pr-1 pb-1">
          <MainToolbar />
          <Breadcrumbs />
          <div className="flex min-h-0 flex-1 pr-[3px]">
            <FoldersPane />
            <div className="ml-px w-px bg-[#a0a0a0]" />
            <FilesPane />
          </div>
          <div className="flex h-5 shrink-0 items-center border-t border-b border-t-[#dcdcdc] border-b-[#a0a0a0]">
            <span className="h-4 w-[199px] border-r border-[#d4d4d4] pl-1 leading-4">Objects: 19</span>
            <span className="h-4 w-[200px] border-r border-[#d4d4d4] pl-[7px] leading-4">Total: 3.67 Mb</span>
            <span className="h-4 w-[200px] border-r border-[#d4d4d4]" />
          </div>
          <div className="h-[6px] shrink-0 border-y-[3px] border-t-white border-b-white bg-white">
            <div className="h-px bg-[#a0a0a0]" />
          </div>
          <LogPanel />
          <LogTabs />
          <div className="h-[9px] shrink-0 border border-l-0 border-[#bcbcbc] bg-[#e6e6e6]" />
        </div>
        <MapPanel />
        <SideToolbar />
      </div>
      <div className="flex h-[50px] shrink-0">
        <Registers title="Status register (SATA1)-[PIO4]" bits={STATUS_BITS} legend="" className="w-[314px] pl-[5px]" />
        <Registers title="Error register (SATA1)" bits={ERROR_BITS} className="w-[317px] pl-[9px]" />
        <Registers title="DMA" bits={[['RQ', 0]]} className="w-[43px] pl-[11px]" />
        <Registers title="SATA-II" bits={[['PHY', 1]]} className="w-[48px] pl-[13px]" />
        <div className="flex-1" />
        <Registers title="Power 5V" bits={[['5V', 1]]} className="w-[89px] pl-[33px]" />
        <Registers title="Power 12V" bits={[['12V', 1]]} className="w-[82px] pl-[32px]" />
      </div>
      <div className="flex h-[2px] shrink-0 bg-[#1d3040] pl-[43px]">
        <div className="w-[288px] bg-[#e8eaec]" />
      </div>
    </div>
  );
}
